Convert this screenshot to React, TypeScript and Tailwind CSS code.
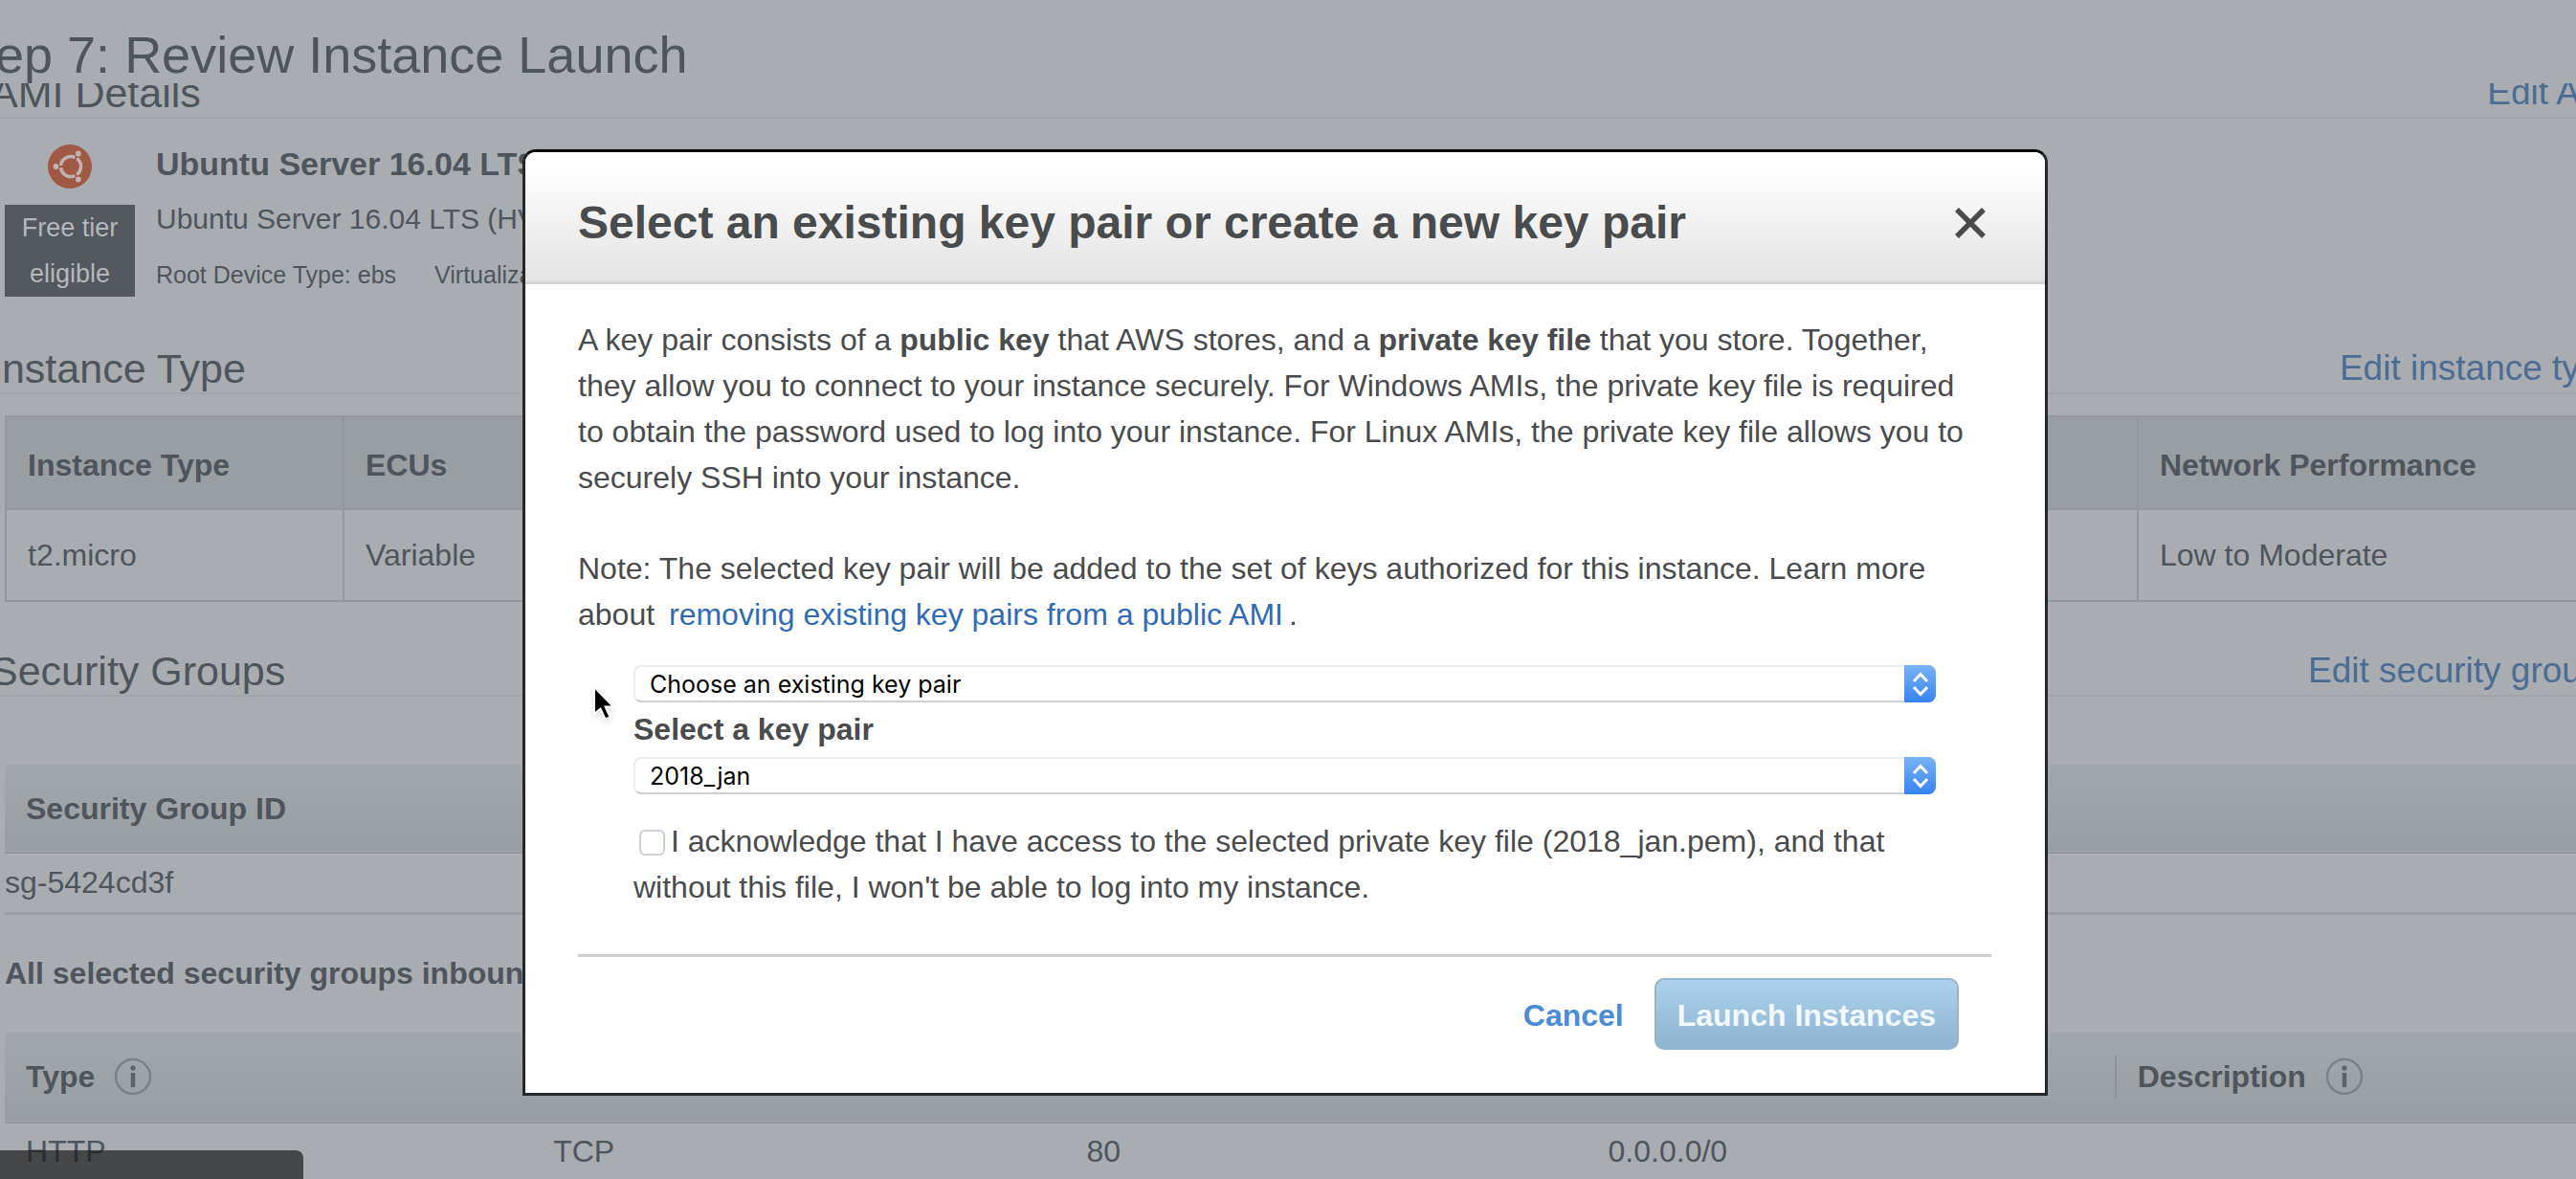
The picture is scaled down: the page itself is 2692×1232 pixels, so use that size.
import type { ReactNode } from "react";

function InfoIcon({ label }: { label: string }) {
  return (
    <button type="button" aria-label={label} className="size-[40px] shrink-0">
      <svg viewBox="0 0 40 40" className="size-full" fill="none">
        <circle cx="20" cy="20" r="18" stroke="#7c8186" strokeWidth="2.5" />
        <circle cx="20" cy="11" r="2.6" fill="#5d6267" />
        <path d="M20 16v15" stroke="#5d6267" strokeWidth="4.4" />
      </svg>
    </button>
  );
}

function UbuntuLogo() {
  return (
    <svg viewBox="0 0 46 46" className="size-[46px]" role="img" aria-label="Ubuntu">
      <circle cx="23" cy="23" r="23" fill="#a05945" />
      <circle cx="24" cy="23" r="10.5" fill="none" stroke="#bfb4b2" strokeWidth="3.6" />
      <path d="M24 23H4M24 23l10-17.300M24 23l10 17.300" stroke="#a05945" strokeWidth="1.8" />
      <circle cx="24" cy="23" r="8.600" fill="#a05945" />
      <g fill="#bfb4b2" stroke="#a05945" strokeWidth="1.4">
        <circle cx="8.500" cy="23" r="3.600" />
        <circle cx="31.800" cy="9.500" r="3.600" />
        <circle cx="31.800" cy="36.500" r="3.600" />
      </g>
    </svg>
  );
}

function SectionHeader({ title, action }: { title: string; action: string }) {
  return (
    <div className="flex h-[54px] items-start justify-between border-b-2 border-[#a1a5aa]">
      <h2 className="text-[43px] leading-[54px]">{title}</h2>
      <a href="#edit" className="text-[37px] leading-[53px] text-[#4b6c93]">
        {action}
      </a>
    </div>
  );
}

function KeySelect({ id, label, value }: { id: string; label?: string; value: string }) {
  return (
    <div className="relative">
      <select
        id={id}
        aria-label={label}
        defaultValue={value}
        className="block h-[39px] w-full appearance-none rounded-lg border-2 border-[#ececec] border-b-[#cfcfcf] bg-white pl-[15px] pr-10 font-[Inter,sans-serif] text-[25px] leading-[34px] text-black"
      >
        <option>{value}</option>
      </select>
      <span className="pointer-events-none absolute inset-y-0 right-0 flex w-[33px] items-center justify-center rounded-r-lg bg-linear-to-b from-[#77b3f6] to-[#3683f2]">
        <svg viewBox="0 0 18 26" className="h-[26px] w-[18px]" fill="none" stroke="#fff" strokeWidth="3">
          <path d="M2 10l7-7.500L16 10M2 16l7 7.500L16 16" />
        </svg>
      </span>
    </div>
  );
}

function GradientHead({ children }: { children: ReactNode }) {
  return (
    <thead className="border-b-2 border-[#92979b] bg-linear-to-b from-[#a2a7ab] to-[#999ea2] text-left">
      {children}
    </thead>
  );
}

function ReviewPage() {
  return (
    <div className="text-[32px] leading-[48px] text-[#4e555c]">
      <header className="h-[87px] overflow-hidden pt-[27px]">
        <h1 className="-ml-[56px] whitespace-nowrap text-[54px] leading-[60px]">
          Step 7: Review Instance Launch
        </h1>
      </header>

      <main className="overflow-hidden">
        <div className="-ml-[10px] -mr-[45px] -mt-[17px]">
          <section>
            <SectionHeader title="AMI Details" action="Edit AMI" />
            <div className="flex h-[234px] items-start gap-[22px] pl-[15px]">
              <div className="flex w-[136px] flex-col items-center gap-[17px] pt-[27px]">
                <UbuntuLogo />
                <p className="w-full bg-[#53585f] text-center text-[27px] leading-[48px] text-[#b4b8bc]">
                  Free tier eligible
                </p>
              </div>
              <div className="whitespace-nowrap pt-[18px] leading-[58px]">
                <h3 className="text-[34px] font-bold">Ubuntu Server 16.04 LTS (HVM)</h3>
                <p className="text-[30px]">Ubuntu Server 16.04 LTS (HVM)</p>
                <p className="flex gap-[40px] text-[25px]">
                  <span>Root Device Type: ebs</span>
                  <span>Virtualization type: hvm</span>
                </p>
              </div>
            </div>
          </section>

          <section>
            <SectionHeader title="Instance Type" action="Edit instance type" />
            <div className="pb-[45px] pl-[15px] pt-[22px]">
              <table className="w-full table-fixed border-collapse text-left">
                <colgroup>
                  <col className="w-[353px]" />
                  <col />
                  <col className="w-[502px]" />
                </colgroup>
                <thead className="bg-[#999ea2]">
                  <tr className="h-[97px]">
                    <th className="border-2 border-[#93989c] px-[22px] pt-1">Instance Type</th>
                    <th className="border-2 border-[#93989c] px-[22px] pt-1">ECUs</th>
                    <th className="border-2 border-[#93989c] px-[22px] pt-1">Network Performance</th>
                  </tr>
                </thead>
                <tbody>
                  <tr className="h-[96px]">
                    <td className="border-2 border-[#93989c] px-[22px]">t2.micro</td>
                    <td className="border-2 border-[#93989c] px-[22px]">Variable</td>
                    <td className="border-2 border-[#93989c] px-[22px]">Low to Moderate</td>
                  </tr>
                </tbody>
              </table>
            </div>
          </section>

          <section>
            <SectionHeader title="Security Groups" action="Edit security groups" />
            <div className="-mr-6 pl-[15px] pt-[71px]">
              <table className="w-full border-collapse">
                <GradientHead>
                  <tr className="h-[92px]">
                    <th className="px-[22px]">Security Group ID</th>
                  </tr>
                </GradientHead>
                <tbody>
                  <tr className="h-[63px] border-b-3 border-[#9a9ea3]">
                    <td>sg-5424cd3f</td>
                  </tr>
                </tbody>
              </table>

              <h3 className="pb-[38px] pt-[37px] font-bold">All selected security groups inbound rules</h3>

              <table className="w-full table-fixed border-collapse">
                <GradientHead>
                  <tr className="h-[94px]">
                    <th className="px-[22px]">
                      <div className="flex items-center gap-5">
                        Type
                        <InfoIcon label="About type" />
                      </div>
                    </th>
                    <th aria-label="Protocol" />
                    <th aria-label="Port range" />
                    <th aria-label="Source" />
                    <th>
                      <div className="flex h-[44px] items-center gap-5 border-l-2 border-[#8d9296] pl-[22px]">
                        Description
                        <InfoIcon label="About description" />
                      </div>
                    </th>
                  </tr>
                </GradientHead>
                <tbody>
                  <tr className="h-[60px]">
                    <td className="px-[22px]">HTTP</td>
                    <td className="px-[22px]">TCP</td>
                    <td className="px-[28px]">80</td>
                    <td className="px-[22px]">0.0.0.0/0</td>
                    <td />
                  </tr>
                </tbody>
              </table>
            </div>
          </section>
        </div>
      </main>
    </div>
  );
}

function KeyPairDialog() {
  return (
    <div
      role="dialog"
      aria-labelledby="dialog-title"
      className="relative w-full max-w-[1594px] overflow-hidden rounded-t-[14px] border-3 border-[#24282b] border-t-black bg-white text-[32px] leading-[48px] text-[#494b4c]"
    >
      <header className="flex h-[138px] items-center justify-between border-b-3 border-[#d4d4d4] bg-linear-to-b from-white from-10% to-[#e3e3e3] pl-[55px] pr-[61px] pt-3">
        <h2 id="dialog-title" className="text-[48px] font-bold leading-[60px]">
          Select an existing key pair or create a new key pair
        </h2>
        <button type="button" aria-label="Close" className="flex">
          <svg viewBox="0 0 34 34" className="size-[34px]" stroke="#494b4c" strokeWidth="5.5">
            <path d="M3 3l28 28M31 3L3 31" />
          </svg>
        </button>
      </header>

      <div className="pb-[45px] pl-[55px] pr-[56px] pt-[34px]">
        <div className="flex flex-col gap-[47px] pr-4">
          <p>
            A key pair consists of a <b>public key</b> that AWS stores, and a <b>private key file</b> that you
            store. Together, they allow you to connect to your instance securely. For Windows AMIs, the private
            key file is required to obtain the password used to log into your instance. For Linux AMIs, the
            private key file allows you to securely SSH into your instance.
          </p>
          <p>
            Note: The selected key pair will be added to the set of keys authorized for this instance. Learn more
            about{" "}
            <a href="#remove" className="px-[6px] text-[#2f6bb5]">
              removing existing key pairs from a public AMI
            </a>
            .
          </p>
        </div>

        <form className="px-[58px] pt-[29px]">
          <KeySelect id="mode" label="Key pair option" value="Choose an existing key pair" />
          <label htmlFor="pair" className="block font-bold leading-[57px]">
            Select a key pair
          </label>
          <KeySelect id="pair" value="2018_jan" />
          <label className="block pt-[25px]">
            <input
              type="checkbox"
              className="ml-1.5 mr-1.5 size-[27px] appearance-none rounded-md border-2 border-[#cfcfcf] bg-white align-[-4px]"
            />
            I acknowledge that I have access to the selected private key file (2018_jan.pem), and that without
            this file, I won't be able to log into my instance.
          </label>
        </form>

        <footer className="mt-[46px] flex items-center justify-end gap-8 border-t-3 border-[#cfcfcf] pr-[34px] pt-[22px]">
          <button type="button" className="pt-[2px] font-bold text-[#4a8cd6]">
            Cancel
          </button>
          <button
            type="button"
            className="h-[75px] rounded-[10px] border-2 border-[#93b5cf] bg-linear-to-b from-[#add2ed] to-[#8db3d1] px-[22px] pt-[2px] font-bold text-[#f3f8fc]"
          >
            Launch Instances
          </button>
        </footer>
      </div>

      <svg
        viewBox="0 0 26 42"
        aria-hidden="true"
        className="absolute left-[70px] top-[557px] h-[42px] w-[26px] drop-shadow-md"
      >
        <path
          d="M2 2v28l6.500-5.500 5 11 5-2.200-4.900-10.800h8.400z"
          fill="#000"
          stroke="#fff"
          strokeWidth="2"
        />
      </svg>
    </div>
  );
}

export default function App() {
  return (
    <div className="relative h-screen overflow-hidden bg-[#a9adb2] font-['Liberation_Sans',Arial,sans-serif]">
      <ReviewPage />
      <div className="absolute bottom-0 left-0 h-[30px] w-[317px] rounded-tr-lg bg-[#1b1b1c]/70" />
      <div className="absolute inset-0 flex items-start justify-center pr-1.5 pt-[156px]">
        <KeyPairDialog />
      </div>
    </div>
  );
}
